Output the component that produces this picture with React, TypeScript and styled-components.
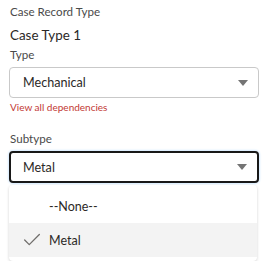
import styled, { createGlobalStyle } from "styled-components";
import { Check } from "lucide-react";

const GlobalStyle = createGlobalStyle`
  body {
    margin: 0;
    background: #ffffff;
    font-family: Lato, "Liberation Sans", Arial, sans-serif;
    color: #2b2826;
  }
`;

const Page = styled.div`
  width: 263px;
  padding: 4px 4px 0 9px;
  box-sizing: border-box;
  display: flex;
  flex-direction: column;
`;

const Label = styled.div`
  font-size: 11.6px;
  line-height: 16px;
  color: #4a4a4a;
  padding-left: 1px;
`;

const Value = styled.div`
  font-size: 13.4px;
  line-height: 20px;
  color: #2b2826;
  padding-left: 1px;
  margin: 5px 0 2px;
`;

const Combobox = styled.div<{ $focused?: boolean }>`
  height: ${(p) => (p.$focused ? "32px" : "31px")};
  margin-top: 4px;
  box-sizing: border-box;
  display: flex;
  align-items: center;
  justify-content: space-between;
  padding: 0 10px 0 ${(p) => (p.$focused ? "12px" : "13px")};
  border: ${(p) => (p.$focused ? "2px solid #181818" : "1px solid #c9c9c9")};
  border-radius: 4px;
  box-shadow: ${(p) => (p.$focused ? "0 0 2px 1px #d6ebff" : "none")};
  font-size: 12.6px;
  color: #2b2826;
`;

const Caret = styled.span`
  width: 0;
  height: 0;
  border-left: 5px solid transparent;
  border-right: 5px solid transparent;
  border-top: 6px solid #747474;
`;

const DependencyLink = styled.a`
  font-size: 10px;
  line-height: 14px;
  color: #c23934;
  text-decoration: none;
  margin: 2px 0 0 1px;
`;

const SubtypeLabel = styled(Label)`
  margin-top: 17px;
`;

const Listbox = styled.ul`
  list-style: none;
  margin: 2px 2px 0 0;
  padding: 4px 0;
  background: #ffffff;
  border-radius: 4px;
  box-shadow: 0 1px 3px rgba(0, 0, 0, 0.18);
`;

const Option = styled.li<{ $selected?: boolean }>`
  height: 34px;
  display: flex;
  align-items: center;
  padding-left: 12px;
  font-size: 12.5px;
  color: #2b2826;
  background: ${(p) => (p.$selected ? "#f3f3f3" : "transparent")};
`;

const CheckSlot = styled.span`
  width: 28px;
  display: flex;
  align-items: center;
  color: #706e6b;
`;

export default function App() {
  return (
    <>
      <GlobalStyle />
      <Page>
        <Label>Case Record Type</Label>
        <Value>Case Type 1</Value>
        <Label>Type</Label>
        <Combobox>
          Mechanical
          <Caret />
        </Combobox>
        <DependencyLink href="#">View all dependencies</DependencyLink>
        <SubtypeLabel>Subtype</SubtypeLabel>
        <Combobox $focused>
          Metal
          <Caret />
        </Combobox>
        <Listbox>
          <Option>
            <CheckSlot />
            --None--
          </Option>
          <Option $selected>
            <CheckSlot>
              <Check size={22} strokeWidth={1.4} />
            </CheckSlot>
            Metal
          </Option>
        </Listbox>
      </Page>
    </>
  );
}
